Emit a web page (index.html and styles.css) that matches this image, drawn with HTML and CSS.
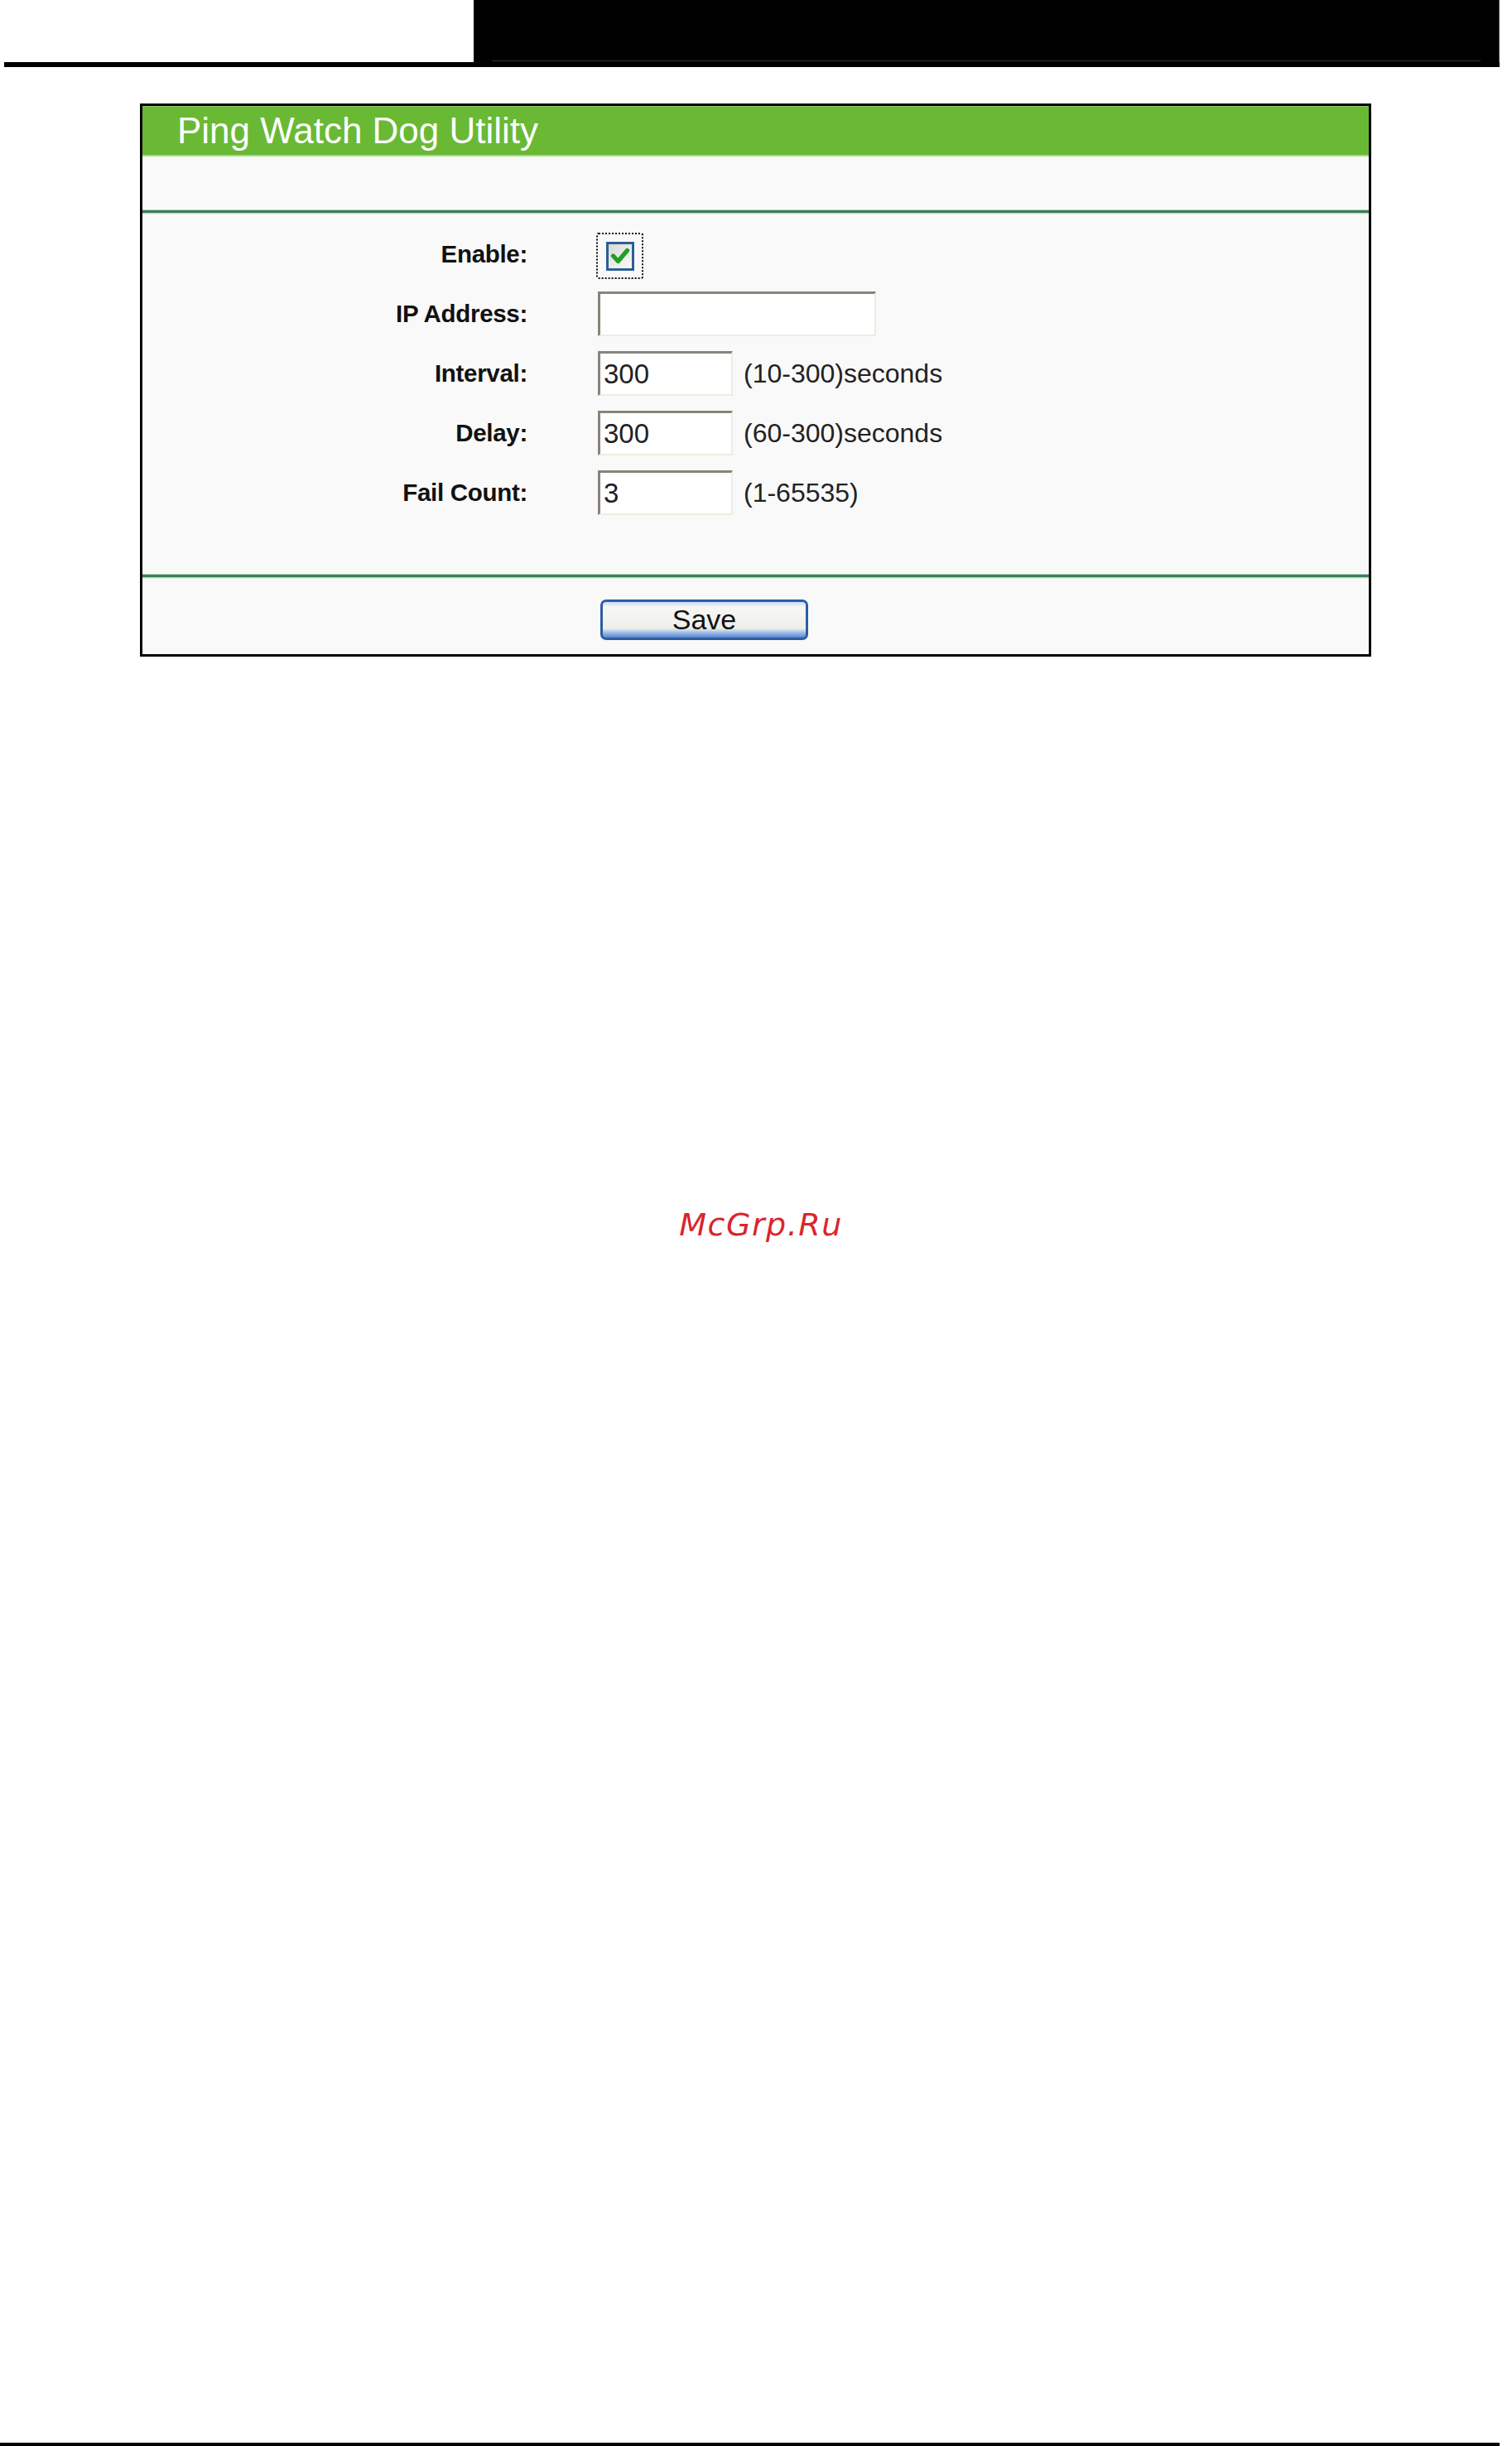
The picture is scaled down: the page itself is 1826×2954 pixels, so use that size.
FILE: index.html
```html
<!DOCTYPE html>
<html lang="en">
<head>
  <meta charset="UTF-8">
  <meta name="viewport" content="width=device-width, initial-scale=1.0">
  <title>Ping Watch Dog Utility</title>
  <link rel="stylesheet" href="styles.css">
</head>
<body>
  <header class="page-head">
    <div class="head-blank"></div>
    <div class="head-box"><div class="head-rule"></div></div>
  </header>
  <div class="head-line"></div>

  <section class="panel">
    <h1 class="panel-title">Ping Watch Dog Utility</h1>
    <div class="panel-gap"></div>
    <div class="rule"></div>

    <form class="form-grid" onsubmit="return false">
      <label class="field-label" for="wd-enable">Enable:</label>
      <div class="field">
        <span class="check-focus" id="wd-enable">
          <span class="check-box">
            <svg viewBox="0 0 28 28" width="28" height="28">
              <path d="M5.5 14 L11.5 20.5 L22.5 7.5" fill="none" stroke="#1f9e27" stroke-width="5.2" stroke-linecap="round" stroke-linejoin="round"/>
            </svg>
          </span>
        </span>
      </div>

      <label class="field-label" for="wd-ip">IP Address:</label>
      <div class="field"><input class="text-input wide" id="wd-ip" type="text" value=""></div>

      <label class="field-label" for="wd-interval">Interval:</label>
      <div class="field">
        <input class="text-input" id="wd-interval" type="text" value="300">
        <span class="hint">(10-300)seconds</span>
      </div>

      <label class="field-label" for="wd-delay">Delay:</label>
      <div class="field">
        <input class="text-input" id="wd-delay" type="text" value="300">
        <span class="hint">(60-300)seconds</span>
      </div>

      <label class="field-label" for="wd-count">Fail Count:</label>
      <div class="field">
        <input class="text-input" id="wd-count" type="text" value="3">
        <span class="hint">(1-65535)</span>
      </div>
    </form>

    <div class="rule"></div>
    <div class="panel-actions">
      <button class="btn-save" type="button">Save</button>
    </div>
  </section>

  <div class="watermark">McGrp.Ru</div>
  <div class="foot-line"></div>
</body>
</html>
```

FILE: styles.css
```css
:root {
  --green: #69b935;
  --rule: #3a7f57;
  --panel-bg: #f9f9f9;
  --text: #111;
}

* {
  margin: 0;
  padding: 0;
  box-sizing: border-box;
}

body {
  font-family: "Liberation Sans", Arial, sans-serif;
  background: #fff;
  color: var(--text);
  min-height: 100vh;
  display: flex;
  flex-direction: column;
}

/* top banner */
.page-head {
  display: flex;
  height: 75px;
}

.head-blank {
  width: 572px;
}

.head-box {
  width: 1239px;
  background: #000;
  padding: 0 22px 1px;
  display: flex;
  align-items: flex-end;
  border-right: 1px solid #555;
}

.head-rule {
  flex: 1;
  height: 1px;
  background: #333;
}

.head-line {
  margin-left: 5px;
  width: 1806px;
  height: 6px;
  background: #000;
}

/* settings panel */
.panel {
  margin: 44px 0 0 169px;
  width: 1487px;
  border: 3px solid #000;
  background: var(--panel-bg);
}

.panel-title {
  height: 61px;
  line-height: 58px;
  padding-left: 42px;
  background: var(--green);
  border-top: 1px solid #8fcc66;
  border-bottom: 2px solid #a9d88a;
  color: #fff;
  font-size: 44px;
  font-weight: 400;
}

.panel-gap {
  height: 65px;
}

.rule {
  height: 3px;
  background: var(--rule);
  box-shadow: 0 -1px 0 #b9d6c3, 0 1px 0 #b9d6c3, 0 2px 0 #e2eee6;
}

.form-grid {
  display: grid;
  grid-template-columns: 465px 1fr;
  grid-auto-rows: 72px;
  column-gap: 85px;
  padding: 14px 0 63px;
}

.field-label {
  display: flex;
  align-items: center;
  justify-content: flex-end;
  font-size: 29.5px;
  font-weight: 700;
  letter-spacing: -0.3px;
}

.field {
  display: flex;
  align-items: center;
  gap: 13px;
}

.check-focus {
  width: 57px;
  height: 56px;
  margin: 4px 0 0 -2px;
  border: 2px dotted #111;
  border-radius: 3px;
  display: flex;
  align-items: center;
  justify-content: center;
}

.check-box {
  width: 34px;
  height: 35px;
  border: 3px solid #2c5f99;
  background: linear-gradient(135deg, #d9d9d2, #fbfbf8);
  display: flex;
  align-items: center;
  justify-content: center;
}

.text-input {
  width: 163px;
  height: 54px;
  padding: 0 4px;
  font-family: "Liberation Sans", Arial, sans-serif;
  font-size: 33px;
  color: #222;
  background: #fff;
  border-top: 3px solid #86857b;
  border-left: 3px solid #86857b;
  border-right: 2px solid #efece0;
  border-bottom: 2px solid #efece0;
  outline: none;
}

.text-input.wide {
  width: 336px;
}

.hint {
  font-size: 32px;
  color: #222;
}

.panel-actions {
  padding: 27px 0 17px 553px;
}

.btn-save {
  width: 251px;
  height: 49px;
  font-family: "Liberation Sans", Arial, sans-serif;
  font-size: 34px;
  color: #111;
  border: 3px solid #2d5da2;
  border-radius: 7px;
  background: linear-gradient(#c6dbf4 0, #f7f7f4 14%, #efefea 74%, #9fbde6 86%, #5586d4 100%);
  cursor: pointer;
}

.watermark {
  margin-top: 663px;
  padding-left: 12px;
  text-align: center;
  font-family: "DejaVu Sans", sans-serif;
  font-style: oblique;
  font-size: 38px;
  line-height: 46px;
  letter-spacing: 1.5px;
  color: #d9262b;
}

.foot-line {
  margin-top: auto;
  width: 1811px;
  height: 4px;
  background: #000;
}
```
